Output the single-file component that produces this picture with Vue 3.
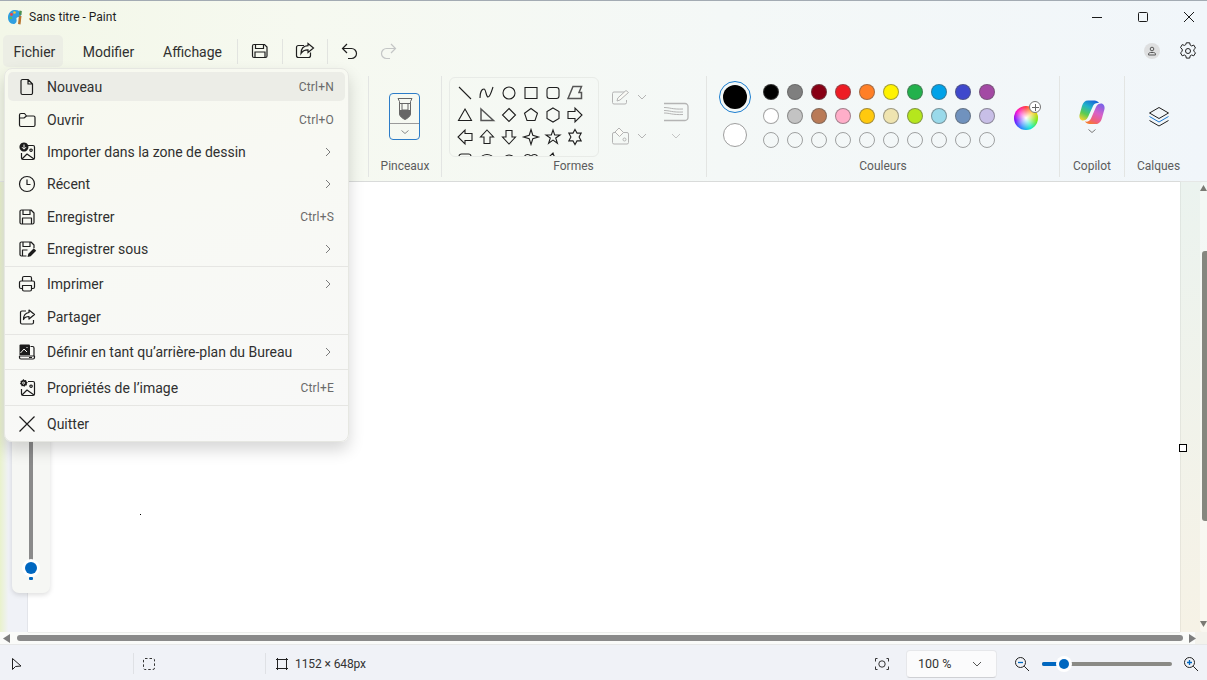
<template>
  <div class="window">
    <header class="titlebar">
      <svg class="app-icon" width="18" height="18" viewBox="0 0 18 18">
        <path d="M8 2c3.500-.6 6.500 1 7 4 .3 2-.8 3-2.300 3-1.700 0-2.700.9-2.200 2.500.5 1.700-.5 4.500-3 4.500C4 16 2 13 2 9.500 2 5.500 4.500 2.500 8 2z" fill="#2f9fe0" />
        <circle cx="5.500" cy="6.500" r="1.400" fill="#e8434f" />
        <circle cx="8.500" cy="4.500" r="1.300" fill="#f7c331" />
        <circle cx="4.800" cy="10" r="1.300" fill="#4fbf5f" />
        <path d="M13 7.500l2.500.5-1 8.500-2.500-.5z" fill="#b8752f" />
        <path d="M13.500 2.500l2.300.4-.3 4.100-2.500-.4z" fill="#4b8f4f" />
      </svg>
      <span class="app-title">Sans titre - Paint</span>
      <div class="window-controls">
        <svg width="46" height="30" viewBox="0 0 46 30"><path d="M18 15.500h10" stroke="#1a1a1a" fill="none" /></svg>
        <svg width="46" height="30" viewBox="0 0 46 30"><rect x="18.500" y="10.500" width="9" height="9" rx="1" stroke="#1a1a1a" fill="none" /></svg>
        <svg width="46" height="30" viewBox="0 0 46 30"><path d="M18 10l10 10M28 10L18 20" stroke="#1a1a1a" fill="none" /></svg>
      </div>
    </header>

    <nav class="menubar">
      <button class="menu-btn active">Fichier</button>
      <button class="menu-btn modifier">Modifier</button>
      <button class="menu-btn affichage">Affichage</button>
      <i class="vsep first"></i>
      <svg class="tool-icon" width="44" height="20" viewBox="0 0 44 20">
        <g fill="none" stroke="#1f1f1f" stroke-width="1.200">
          <path d="M16 3.500h10.500l2.500 2.500v9a1.500 1.500 0 0 1-1.500 1.500H16a1.500 1.500 0 0 1-1.500-1.500V5A1.500 1.500 0 0 1 16 3.500z" />
          <path d="M17.500 3.500v4h8v-4M17 16.500V11h10v5.500" />
        </g>
      </svg>
      <i class="vsep"></i>
      <svg class="tool-icon" width="44" height="20" viewBox="0 0 44 20">
        <g fill="none" stroke="#1f1f1f" stroke-width="1.200">
          <path d="M21 4.500h-5.500a2 2 0 0 0-2 2v8a2 2 0 0 0 2 2h10a2 2 0 0 0 2-2v-3" />
          <path d="M25 2.500l5.500 4.500-5.500 4.500V8.800c-3.500 0-5.500 1-7 3.700 0-4.500 2.500-7.500 7-7.800z" />
        </g>
      </svg>
      <i class="vsep"></i>
      <svg class="tool-icon" width="44" height="20" viewBox="0 0 44 20">
        <path d="M19 3l-4.500 4.500L19 12M15 7.500h8.500a5 5 0 0 1 0 10H20" fill="none" stroke="#1f1f1f" stroke-width="1.200" />
      </svg>
      <svg class="tool-icon redo" width="36" height="20" viewBox="0 0 36 20">
        <path d="M21 3l4.500 4.500L21 12M25 7.500h-8.500a5 5 0 0 0 0 10H20" fill="none" stroke="#c4c6c6" stroke-width="1.200" />
      </svg>
      <div class="menubar-right">
        <span class="avatar">
          <svg width="10" height="10" viewBox="0 0 10 10"><circle cx="5" cy="3" r="1.800" fill="none" stroke="#555" /><path d="M1.500 9v-.8c0-1 1-1.700 2-1.700h3c1 0 2 .7 2 1.700V9z" fill="none" stroke="#555" /></svg>
        </span>
        <svg class="gear" width="20" height="20" viewBox="0 0 20 20">
          <path d="M8.300 1.800h3.400l.5 2.300 1.400.8 2.200-.8 1.700 3-1.700 1.500v1.700l1.700 1.500-1.700 3-2.200-.8-1.400.8-.5 2.300H8.300l-.5-2.300-1.400-.8-2.200.8-1.700-3 1.700-1.500V8.100L2.500 6.600l1.700-3 2.200.8 1.400-.8z" fill="none" stroke="#1f1f1f" stroke-linejoin="round" />
          <circle cx="10" cy="10" r="2.500" fill="none" stroke="#1f1f1f" />
        </svg>
      </div>
    </nav>

    <section class="ribbon">
      <div class="group hidden-group"></div>

      <div class="group brushes">
        <div class="group-body">
          <div class="brush-btn">
            <svg width="16" height="22" viewBox="0 0 16 22">
              <path d="M1 .5h14l-1.500 3v2h-11v-2z" fill="none" stroke="#666" />
              <path d="M2.500 5.500H5v6.500h6V5.500h2.500V16c0 2-3 4.500-5.500 5.500-2.500-1-5.500-3.500-5.500-5.500z" fill="none" stroke="#666" />
              <path d="M2.500 12h11v4c0 2-3 4.500-5.500 5.500-2.500-1-5.500-3.500-5.500-5.500z" fill="#666" />
            </svg>
            <span class="brush-split"></span>
            <svg class="chev" width="10" height="6" viewBox="0 0 10 6"><path d="M1.500 1.500L5 4.500l3.500-3" fill="none" stroke="#8a8a8a" /></svg>
          </div>
        </div>
        <span class="group-label">Pinceaux</span>
      </div>

      <div class="group shapes">
        <div class="group-body shapes-body">
          <div class="gallery">
            <svg v-for="(d, i) in shapePaths" :key="i" width="22" height="22" viewBox="0 0 22 22">
              <path :d="d" fill="none" :stroke="i === 5 || i === 7 ? '#555' : '#1f1f1f'" :stroke-width="i === 5 || i === 7 ? 1.5 : 1.1" />
            </svg>
          </div>
          <div class="shape-opts">
            <div class="opt">
              <svg width="20" height="16" viewBox="0 0 20 16">
                <path d="M14 3H3a1.500 1.500 0 0 0-1.500 1.500v9A1.500 1.500 0 0 0 3 15h11a1.500 1.500 0 0 0 1.500-1.500V11" fill="none" stroke="#b4b4b4" />
                <path d="M6 12l.8-3L15 1.500l2.500 2L9 11z" fill="#fbfbf6" stroke="#b4b4b4" />
              </svg>
              <svg width="10" height="6" viewBox="0 0 10 6"><path d="M1 1l4 4 4-4" fill="none" stroke="#b4b4b4" /></svg>
            </div>
            <div class="opt">
              <svg width="20" height="18" viewBox="0 0 20 18">
                <rect x="1.500" y="5.500" width="16" height="11.500" rx="1.500" fill="none" stroke="#b4b4b4" />
                <path d="M4 5l4-4 4.500 4.500-4 4z" fill="#fbfbf6" stroke="#b4b4b4" />
                <circle cx="13.500" cy="12.500" r="1.500" fill="none" stroke="#b4b4b4" />
              </svg>
              <svg width="10" height="6" viewBox="0 0 10 6"><path d="M1 1l4 4 4-4" fill="none" stroke="#b4b4b4" /></svg>
            </div>
          </div>
          <div class="thickness">
            <svg width="26" height="20" viewBox="0 0 26 20">
              <path d="M1 1.500h21a3 3 0 0 1 3 3v11a3 3 0 0 1-3 3H1" fill="none" stroke="#b4b4b4" stroke-width="1.300" />
              <path d="M1 5.500c6 0 8 2 19 1.500M1 8.500c6 0 8 2 19 1.500M1 11c6 0 8 2 19 1.500" fill="none" stroke="#b4b4b4" />
            </svg>
            <svg width="10" height="6" viewBox="0 0 10 6"><path d="M1 1l4 4 4-4" fill="none" stroke="#c4c4c4" /></svg>
          </div>
        </div>
        <span class="group-label shapes-label">Formes</span>
      </div>

      <div class="group colours">
        <div class="group-body colours-body">
          <div class="current">
            <span class="cur-ring"><span class="cur-black"></span></span>
            <span class="cur-white"></span>
          </div>
          <div class="palette">
            <span
              v-for="(c, i) in palette"
              :key="i"
              class="swatch"
              :style="{ background: c }"
            ></span>
          </div>
          <div class="wheel">
            <span class="wheel-plus">
              <svg width="9" height="9" viewBox="0 0 9 9"><path d="M4.500 1v7M1 4.500h7" stroke="#666" fill="none" /></svg>
            </span>
          </div>
        </div>
        <span class="group-label">Couleurs</span>
      </div>

      <div class="group copilot">
        <div class="group-body copilot-body">
          <svg width="26" height="26" viewBox="0 0 26 26">
            <defs>
              <linearGradient id="cpa" x1="0.700" y1="0" x2="0.200" y2="1">
                <stop offset="0" stop-color="#1868d8" />
                <stop offset="0.350" stop-color="#20b4c8" />
                <stop offset="0.700" stop-color="#5ccc50" />
                <stop offset="1" stop-color="#f0d030" />
              </linearGradient>
              <linearGradient id="cpb" x1="0.800" y1="0" x2="0.300" y2="1">
                <stop offset="0" stop-color="#7a62e8" />
                <stop offset="0.450" stop-color="#d860c8" />
                <stop offset="0.800" stop-color="#f0607a" />
                <stop offset="1" stop-color="#f47a30" />
              </linearGradient>
            </defs>
            <path d="M17 25h-6.500c-2 0-3.500-1-4.500-2.500 3 .5 5-.5 6-3L17 8c1-2.500 3-3.500 5-3.500 2.500 0 4 2.500 3.500 5.500L23 19c-1 3.500-3 6-6 6z" fill="url(#cpb)" />
            <path d="M9 1.500h6.500c2 0 3.500 1 4.500 2.500-3-.5-5 .5-6 3L9 18c-1 2.500-3 3.500-5 3.500-2.500 0-4-2.500-3.500-5.500L3 7c1-3.500 3-5.500 6-5.500z" fill="url(#cpa)" />
          </svg>
          <svg width="10" height="6" viewBox="0 0 10 6"><path d="M1.500 1.500L5 4.500l3.500-3" fill="none" stroke="#7a7a7a" /></svg>
        </div>
        <span class="group-label">Copilot</span>
      </div>

      <div class="group layers">
        <div class="group-body layers-body">
          <svg width="22" height="22" viewBox="0 0 22 22">
            <path d="M11 1.500L20.500 7 11 12.500 1.500 7z" fill="none" stroke="#1f1f1f" />
            <path d="M1.500 10.500L11 16l9.500-5.500" fill="none" stroke="#1c78d0" />
            <path d="M1.500 14.500L11 20l9.500-5.500" fill="none" stroke="#1f1f1f" />
          </svg>
        </div>
        <span class="group-label">Calques</span>
      </div>
    </section>

    <main class="workspace">
      <div class="gutter"></div>
      <div class="canvas">
        <span class="dot"></span>
        <span class="handle"></span>
      </div>
      <div class="vscroll">
        <svg class="v-arrow" width="7" height="6" viewBox="0 0 7 6"><path d="M3.500 0L7 6H0z" fill="#7a7a74" /></svg>
        <span class="v-thumb"></span>
        <svg class="v-arrow bottom" width="7" height="6" viewBox="0 0 7 6"><path d="M0 0h7L3.500 6z" fill="#7a7a74" /></svg>
      </div>

      <div class="size-panel">
        <span class="size-track"></span>
        <span class="size-knob"></span>
        <span class="size-tick"></span>
      </div>
    </main>

    <div class="hscroll">
      <svg width="8" height="9" viewBox="0 0 8 9"><path d="M7 0v9L0 4.500z" fill="#7d7d7d" /></svg>
      <span class="h-thumb"></span>
      <svg width="8" height="9" viewBox="0 0 8 9"><path d="M1 0v9l7-4.500z" fill="#7d7d7d" /></svg>
    </div>

    <footer class="statusbar">
      <div class="st st-cursor">
        <svg width="14" height="14" viewBox="0 0 14 14"><path d="M4.500 1.500v11l3-3 5.500-.5z" fill="none" stroke="#1f1f1f" /></svg>
      </div>
      <div class="st st-select">
        <svg width="14" height="14" viewBox="0 0 14 14"><rect x="1.500" y="1.500" width="11" height="11" rx="1.500" fill="none" stroke="#333" stroke-dasharray="2.500 2" /></svg>
      </div>
      <div class="st st-size">
        <svg width="14" height="14" viewBox="0 0 14 14"><path d="M1 2.500h12M1 11.500h12M2.500 1v12M11.500 1v12" fill="none" stroke="#222" /></svg>
        <span>1152 × 648px</span>
      </div>
      <div class="st-right">
        <svg class="fit" width="16" height="14" viewBox="0 0 16 14">
          <path d="M3.500 1.500h-2v3M12.500 1.500h2v3M3.500 12.500h-2v-3M12.500 12.500h2v-3" fill="none" stroke="#333" />
          <circle cx="8" cy="7" r="3.200" fill="none" stroke="#333" />
        </svg>
        <div class="zoom-select">
          <span>100 %</span>
          <svg width="10" height="6" viewBox="0 0 10 6"><path d="M1 1l4 4 4-4" fill="none" stroke="#555" /></svg>
        </div>
        <svg class="zoom-out" width="16" height="16" viewBox="0 0 16 16">
          <circle cx="6.500" cy="6.500" r="5" fill="none" stroke="#222" />
          <path d="M10.200 10.200L15 15" stroke="#222" fill="none" />
          <path d="M4 6.500h5" stroke="#0067c0" stroke-width="1.300" fill="none" />
        </svg>
        <div class="zoom-slider">
          <span class="zs-fill"></span>
          <span class="zs-knob"></span>
        </div>
        <svg class="zoom-in" width="16" height="16" viewBox="0 0 16 16">
          <circle cx="6.500" cy="6.500" r="5" fill="none" stroke="#222" />
          <path d="M10.200 10.200L15 15" stroke="#222" fill="none" />
          <path d="M4 6.500h5M6.500 4v5" stroke="#0067c0" stroke-width="1.300" fill="none" />
        </svg>
      </div>
    </footer>

    <div class="file-menu">
      <div v-for="(group, g) in menu" :key="g" class="menu-group">
        <div
          v-for="item in group.items"
          :key="item.label"
          class="menu-item"
          :class="{ hovered: item.hovered }"
          :style="{ height: group.row + 'px' }"
        >
          <svg class="menu-icon" width="20" height="20" viewBox="0 0 20 20">
            <path :d="item.icon" fill="none" stroke="#1c1c1c" stroke-width="1.2" stroke-linejoin="round" />
            <path v-if="item.solid" :d="item.solid" fill="#1c1c1c" />
            <path v-if="item.light" :d="item.light" fill="none" stroke="#f8f9f4" />
          </svg>
          <span class="menu-label">{{ item.label }}</span>
          <span v-if="item.shortcut" class="menu-shortcut">{{ item.shortcut }}</span>
          <svg v-if="item.sub" class="menu-arrow" width="6" height="10" viewBox="0 0 6 10"><path d="M1 1l4 4-4 4" fill="none" stroke="#7c7c7c" /></svg>
        </div>
      </div>
    </div>
  </div>
</template>

<script setup>
const shapePaths = [
  'M5 5l12 12',
  'M4 16c0-6 2-9 4-9s2 8 4 8 3-4 5-10',
  'M17 11a6 6 0 1 1-12 0 6 6 0 0 1 12 0z',
  'M5 5.5h12v11H5z',
  'M7.5 5.5h7A2.500 2.500 0 0 1 17 8v6a2.500 2.500 0 0 1-2.500 2.500h-7A2.500 2.500 0 0 1 5 14V8a2.500 2.500 0 0 1 2.500-2.500z',
  'M9 4.500h8.500l-2.500 6h2.500v6H4z',
  'M11 5l6.500 11.500h-13z',
  'M5 5l12.500 11.500H5z',
  'M11 4.500l6.500 6.500-6.500 6.500L4.500 11z',
  'M11 4.500l6.500 4.700-2.500 7.300H7L4.500 9.200z',
  'M11 4l6 3.500v7L11 18l-6-3.500v-7z',
  'M4 7.500h7V4l7 7-7 7v-3.500H4z',
  'M18 7.500h-7V4l-7 7 7 7v-3.500h7z',
  'M11 4l6.500 7H14v6.500H8V11H4.500z',
  'M8 4.500h6V11h3.500L11 18l-6.500-7H8z',
  'M11 3.500l1.800 5.700 5.700 1.800-5.700 1.800-1.800 5.700-1.800-5.700L3.500 11l5.700-1.800z',
  'M11 4l1.700 5H18l-4.300 3 1.700 5.300-4.400-3.200-4.400 3.200 1.700-5.300-4.300-3h5.300z',
  'M11 3.500l2 3.600h4.200L15.100 11l2.100 3.900H13l-2 3.600-2-3.600H4.800L6.900 11 4.800 7.100H9z',
  'M5 12V8.500A2.500 2.500 0 0 1 7.500 6h7A2.500 2.500 0 0 1 17 8.500V12',
  'M4.500 12c0-3.500 3-5.500 6.500-5.500s6.500 2 6.500 5.500',
  'M6 12c0-3 2-5 5-5s5 2 5 5',
  'M4.500 12c-1-3 .5-5.500 3-5.500 1.500 0 3 1 3.500 2 .5-1 2-2 3.500-2 2.500 0 4 2.500 3 5.500',
  'M8 12l1-2-2-1 4-4 1 3 2 1-2 1'
]

const colours = [
  '#000000', '#7f7f7f', '#880015', '#ed1c24', '#ff7f27', '#fff200', '#22b14c', '#00a2e8', '#3f48cc', '#a349a4',
  '#ffffff', '#c3c3c3', '#b97a57', '#ffaec9', '#ffc90e', '#efe4b0', '#b5e61d', '#99d9ea', '#7092be', '#c8bfe7'
]
const palette = [...colours, ...Array(10).fill('transparent')]

const picture = 'M11 3.500h5A1.500 1.500 0 0 1 17.500 5v11a1.500 1.500 0 0 1-1.500 1.500H6A1.500 1.500 0 0 1 4.500 16v-5M5 17l5-5 7 5M14 7a1.200 1.200 0 1 0 .1 0z'

const menu = [
  {
    row: 32.4,
    items: [
      {
        label: 'Nouveau',
        icon: 'M5.500 2.500H11L15.500 7v9a1.500 1.500 0 0 1-1.500 1.500H5.500A1.500 1.500 0 0 1 4 16V4a1.500 1.500 0 0 1 1.500-1.500zM11 2.500V7h4.500',
        shortcut: 'Ctrl+N',
        hovered: true
      },
      {
        label: 'Ouvrir',
        icon: 'M2.500 15V5A1.500 1.500 0 0 1 4 3.500h3.500L9.500 6h7A1.500 1.500 0 0 1 18 7.500V15a1.500 1.500 0 0 1-1.500 1.500H4A1.500 1.500 0 0 1 2.500 15zM2.500 8H7l2.500-2',
        shortcut: 'Ctrl+O'
      },
      {
        label: 'Importer dans la zone de dessin',
        icon: picture,
        solid: 'M7 .5a4.500 4.500 0 1 1-.1 0z',
        light: 'M7 2.500V7M5 5.200L7 7.200l2-2',
        sub: true
      },
      {
        label: 'Récent',
        icon: 'M17.500 10a7.500 7.500 0 1 1-15 0 7.500 7.500 0 0 1 15 0zM10 5.500v5h3.500',
        sub: true
      },
      {
        label: 'Enregistrer',
        icon: 'M4.500 3H14l3 3v9.500a1.500 1.500 0 0 1-1.500 1.500h-11A1.500 1.500 0 0 1 3 15.500v-11A1.500 1.500 0 0 1 4.500 3zM6 3v4.500h7V3M5.500 17v-6h9v6',
        shortcut: 'Ctrl+S'
      },
      {
        label: 'Enregistrer sous',
        icon: 'M4.500 3H14l3 3v3M9.500 17h-5A1.500 1.500 0 0 1 3 15.500v-11A1.500 1.500 0 0 1 4.500 3M6 3v4.500h7V3M5.500 17v-6h5',
        solid: 'M10.500 18l.8-3.200 5.500-5.500 2.400 2.400-5.500 5.500z',
        sub: true
      }
    ]
  },
  {
    row: 33,
    items: [
      {
        label: 'Imprimer',
        icon: 'M5.500 7V4A1.500 1.500 0 0 1 7 2.500h6A1.500 1.500 0 0 1 14.500 4v3M5.500 14.500H4A1.500 1.500 0 0 1 2.500 13V8.500A1.500 1.500 0 0 1 4 7h12a1.500 1.500 0 0 1 1.500 1.500V13a1.500 1.500 0 0 1-1.500 1.500h-1.500M5.500 11.500h9v4A1.500 1.500 0 0 1 13 17H7a1.500 1.500 0 0 1-1.500-1.500z',
        sub: true
      },
      {
        label: 'Partager',
        icon: 'M9 4H5a1.500 1.500 0 0 0-1.500 1.500v10A1.500 1.500 0 0 0 5 17h10a1.500 1.500 0 0 0 1.500-1.500V13M12 3l5.500 4.500L12 12V9.500c-2.800 0-4.500 1-5.500 3 0-4 2-6.500 5.500-7z'
      }
    ]
  },
  {
    row: 34,
    items: [
      {
        label: 'Définir en tant qu’arrière-plan du Bureau',
        icon: 'M13.500 4.500h2A1.500 1.500 0 0 1 17 6v8M2.500 14v1.500A1.500 1.500 0 0 0 4 17h12a1.500 1.500 0 0 0 1.500-1.500V14zM12 15.500h3',
        solid: 'M3.500 2.500H12A1 1 0 0 1 13 3.500V13H2.500V3.500a1 1 0 0 1 1-1z',
        light: 'M3.500 11l3.500-4 3 3M9.500 5.500h1',
        sub: true
      }
    ]
  },
  {
    row: 35,
    items: [
      {
        label: 'Propriétés de l’image',
        icon: picture,
        solid: 'M6.500 1l1 1.200 1.600-.3.300 1.600 1.300 1-1 1.300.3 1.500-1.600.3-1 1.200-1.300-.9-1.500.4-.4-1.600-1.300-1 .9-1.300-.3-1.500 1.600-.4z',
        light: 'M6.500 4.200a.9.900 0 1 0 .1 0z',
        shortcut: 'Ctrl+E'
      }
    ]
  },
  {
    row: 35,
    items: [{ label: 'Quitter', icon: 'M2.500 2.500l15 15M17.500 2.500l-15 15' }]
  }
]
</script>

<style scoped>
.window {
  position: relative;
  width: 1207px;
  height: 680px;
  overflow: hidden;
  display: flex;
  flex-direction: column;
  font-family: Roboto, "Open Sans", Arial, sans-serif;
  color: #1f1f1f;
  background: linear-gradient(90deg, #f3f7e8 0, #f6f9f0 25%, #f4f8f7 60%, #f1f6fa 100%);
  border-top: 1px solid #a3abb3;
  box-sizing: border-box;
}

.titlebar {
  height: 31px;
  flex: none;
  display: flex;
  align-items: center;
  padding-left: 6px;
}
.app-icon {
  flex: none;
}
.app-title {
  margin-left: 5px;
  font-size: 12px;
}
.window-controls {
  margin-left: auto;
  display: flex;
  margin-right: -5px;
}

.menubar {
  height: 38px;
  flex: none;
  display: flex;
  align-items: center;
  padding-left: 3px;
}
.menu-btn {
  height: 32px;
  border: 0;
  border-radius: 5px;
  background: transparent;
  font: inherit;
  font-size: 14px;
  color: #303030;
  padding: 1px 0 0;
}
.menu-btn.active {
  width: 60px;
  padding-left: 3px;
  background: #eceee5;
}
.menu-btn.modifier {
  margin-left: 19px;
  width: 53px;
}
.menu-btn.affichage {
  margin-left: 28px;
  width: 58px;
}
.vsep {
  width: 1px;
  height: 25px;
  background: #e2e4e0;
  flex: none;
}
.vsep.first {
  margin-left: 16px;
}
.tool-icon {
  flex: none;
}
.tool-icon.redo {
  margin-left: -2px;
}
.menubar-right {
  margin-left: auto;
  display: flex;
  align-items: center;
  padding-right: 9px;
  gap: 18px;
}
.avatar {
  width: 16px;
  height: 16px;
  border-radius: 50%;
  background: #dedfe0;
  display: flex;
  align-items: center;
  justify-content: center;
}

.ribbon {
  height: 112px;
  flex: none;
  display: flex;
  border-bottom: 1px solid #e5e7e6;
  box-sizing: border-box;
  padding-top: 6px;
}
.group {
  display: flex;
  flex-direction: column;
  align-items: center;
  height: 101px;
  border-right: 1px solid #e3e5e3;
  box-sizing: border-box;
}
.group:last-child {
  border-right: 0;
}
.group-body {
  flex: 1;
  min-height: 0;
  align-self: stretch;
  display: flex;
}
.group-label {
  font-size: 12px;
  color: #5c5c5c;
  line-height: 16px;
  height: 19px;
}
.hidden-group {
  width: 369px;
}
.brushes {
  width: 73px;
}
.brushes .group-body {
  justify-content: center;
  padding: 17px 1px 0 0;
}
.brush-btn {
  width: 31px;
  height: 47px;
  border: 1px solid #2c7cc8;
  border-radius: 4px;
  box-sizing: border-box;
  display: flex;
  flex-direction: column;
  align-items: center;
  padding-top: 4px;
}
.brush-split {
  width: 100%;
  height: 1px;
  background: #9a9a9a;
  margin-top: 3px;
}
.chev {
  margin-top: 5px;
}
.shapes {
  width: 265px;
}
.shapes-body {
  padding: 1px 0 0 7px;
}
.shapes-label {
  margin-left: -1px;
}
.gallery {
  width: 150px;
  height: 80px;
  border: 1px solid #e8ebe7;
  border-radius: 6px;
  box-sizing: border-box;
  padding: 4px 0 0 4px;
  overflow: hidden;
  display: grid;
  grid-template-columns: repeat(6, 22px);
  grid-auto-rows: 22px;
}
.gallery svg {
  display: block;
}
.shape-opts {
  margin-left: 12px;
  display: flex;
  flex-direction: column;
  gap: 20px;
  padding-top: 10px;
}
.opt {
  display: flex;
  align-items: center;
  gap: 6px;
  height: 19px;
}
.thickness {
  margin-left: 16px;
  display: flex;
  flex-direction: column;
  align-items: center;
  gap: 11px;
  padding-top: 25px;
}
.colours {
  width: 353px;
}
.colours-body {
  padding-left: 11px;
}
.current {
  width: 34px;
  display: flex;
  flex-direction: column;
  align-items: center;
  gap: 10px;
  padding-top: 5px;
}
.cur-ring {
  width: 32px;
  height: 32px;
  border: 1px solid #1c7ed0;
  border-radius: 50%;
  box-sizing: border-box;
  display: flex;
  align-items: center;
  justify-content: center;
}
.cur-black {
  width: 24px;
  height: 24px;
  background: #000;
  border-radius: 50%;
}
.cur-white {
  width: 24px;
  height: 24px;
  background: #fff;
  border: 1px solid #9e9e9e;
  border-radius: 50%;
  box-sizing: border-box;
}
.palette {
  margin: 8px 0 0 11px;
  display: grid;
  grid-template-columns: repeat(10, 16px);
  grid-auto-rows: 16px;
  gap: 8px;
  align-content: start;
}
.swatch {
  border: 1px solid rgba(90, 90, 90, 0.55);
  border-radius: 50%;
  box-sizing: border-box;
}
.wheel {
  position: relative;
  width: 24px;
  height: 24px;
  margin: 30px 0 0 19px;
  border-radius: 50%;
  background:
    radial-gradient(circle, #fff 0, rgba(255, 255, 255, 0) 72%),
    conic-gradient(#ff2d2d, #ffc400, #6fe800, #00e8c8, #1a7cff, #6a00ff, #ff00c8, #ff2d2d);
}
.wheel-plus {
  position: absolute;
  top: -5px;
  right: -3px;
  width: 12px;
  height: 12px;
  border: 1px solid #777;
  border-radius: 50%;
  background: #fff;
  display: flex;
  align-items: center;
  justify-content: center;
  box-sizing: border-box;
}
.copilot {
  width: 65px;
}
.copilot-body {
  flex-direction: column;
  align-items: center;
  padding-top: 23px;
  gap: 3px;
}
.layers {
  flex: 1;
  padding-right: 15px;
}
.layers-body {
  justify-content: center;
  padding-top: 30px;
}

.workspace {
  position: relative;
  flex: 1;
  min-height: 0;
  display: flex;
  background: linear-gradient(180deg, #ebf3ef, #f6f2e6);
}
.gutter {
  width: 28px;
  flex: none;
  background:
    linear-gradient(90deg, #e9f2cc 0, rgba(240, 242, 247, 0) 30%),
    #f0f2f7;
}
.canvas {
  position: relative;
  width: 1152px;
  flex: none;
  background: #fff;
  box-shadow: 0 0 1px rgba(0, 0, 0, 0.3);
}
.dot {
  position: absolute;
  left: 112px;
  top: 332px;
  width: 1px;
  height: 1px;
  background: #000;
}
.handle {
  position: absolute;
  right: -7px;
  top: 262px;
  width: 6px;
  height: 6px;
  background: #fff;
  border: 1px solid #000;
}
.vscroll {
  flex: 1;
  margin-left: 20px;
  display: flex;
  flex-direction: column;
  align-items: flex-end;
  padding: 3px 0 5px;
  box-sizing: border-box;
  background: rgba(255, 255, 255, 0.4);
  border-radius: 3px 0 0 3px;
}
.v-arrow {
  flex: none;
}
.v-arrow.bottom {
  margin-top: auto;
}
.v-thumb {
  flex: none;
  width: 5px;
  height: 270px;
  background: #85877f;
  margin-top: 60px;
  border-radius: 3px 0 0 3px;
}
.size-panel {
  position: absolute;
  left: 12px;
  top: 60px;
  width: 38px;
  height: 351px;
  background: #f6f7f4;
  border-radius: 7px;
  box-shadow: 0 2px 5px rgba(0, 0, 0, 0.13);
}
.size-track {
  position: absolute;
  left: 17px;
  top: 0;
  bottom: 30px;
  width: 4px;
  background: #8a8a8a;
}
.size-knob {
  position: absolute;
  left: 13px;
  top: 320px;
  width: 12px;
  height: 12px;
  border-radius: 50%;
  background: #0067c0;
  box-shadow: 0 0 0 3px #fff;
}
.size-tick {
  position: absolute;
  left: 17px;
  top: 335px;
  width: 4px;
  height: 3px;
  background: #0067c0;
  border-radius: 1px;
}

.hscroll {
  height: 12px;
  flex: none;
  display: flex;
  align-items: center;
  padding: 0 11px 0 3px;
  gap: 5px;
  background: linear-gradient(90deg, #fafbf9 99%, #f3f2ec 99%);
  border-bottom: 1px solid #e7e8e8;
}
.h-thumb {
  flex: 1;
  height: 6px;
  margin-left: 1px;
  border-radius: 3px;
  background: #8a8a8a;
}

.statusbar {
  height: 35px;
  flex: none;
  display: flex;
  align-items: center;
  padding-top: 2px;
  box-sizing: border-box;
  background: #f0f2f7;
  font-size: 12px;
  color: #333;
}
.st {
  height: 21px;
  display: flex;
  align-items: center;
  box-sizing: border-box;
  padding-left: 8px;
}
.st-cursor {
  width: 134px;
  border-right: 1px solid #dfe1e5;
}
.st-select {
  width: 132px;
  border-right: 1px solid #dfe1e5;
}
.st-size {
  padding-left: 9px;
  gap: 6px;
  letter-spacing: -0.1px;
}
.st-right {
  margin-left: auto;
  display: flex;
  align-items: center;
  padding-right: 8px;
}
.zoom-select {
  width: 91px;
  height: 28px;
  margin-left: 16px;
  background: #fbfbfc;
  border: 1px solid #e6e7ea;
  border-bottom-color: #cfd0d4;
  border-radius: 4px;
  box-sizing: border-box;
  display: flex;
  align-items: center;
  justify-content: space-between;
  padding: 0 14px 0 11px;
  font-size: 12.5px;
}
.zoom-out {
  margin-left: 17px;
}
.zoom-slider {
  position: relative;
  width: 130px;
  height: 4px;
  margin: 0 11px 0 12px;
  background: #8a8a85;
  border-radius: 2px;
}
.zs-fill {
  position: absolute;
  left: 0;
  top: 0;
  width: 20px;
  height: 4px;
  background: #0067c0;
  border-radius: 2px;
}
.zs-knob {
  position: absolute;
  left: 17px;
  top: -3px;
  width: 10px;
  height: 10px;
  background: #0067c0;
  border-radius: 50%;
  box-shadow: 0 0 0 3px #fff;
}

.file-menu {
  position: absolute;
  left: 4px;
  top: 67px;
  width: 345px;
  background: linear-gradient(160deg, #f7f9ee 0, #f8f9f4 40%, #f8f8f8 100%);
  border: 1px solid #e6e7e2;
  border-radius: 8px;
  box-shadow: 0 8px 16px rgba(0, 0, 0, 0.16);
  box-sizing: border-box;
  padding-top: 2px;
}
.menu-group {
  border-top: 1px solid #e6e6e3;
}
.menu-group:first-child {
  border-top: 0;
  padding-bottom: 1px;
}
.menu-group:nth-child(2) {
  padding-bottom: 1px;
}
.menu-item {
  position: relative;
  display: flex;
  align-items: center;
  padding: 0 14px 0 12px;
  font-size: 14px;
  color: #303030;
}
.menu-item.hovered::before {
  content: "";
  position: absolute;
  left: 3px;
  right: 3px;
  top: 1px;
  bottom: 2px;
  border-radius: 5px;
  background: #ecede7;
}
.menu-icon,
.menu-label,
.menu-shortcut,
.menu-arrow {
  position: relative;
}
.menu-icon {
  flex: none;
}
.menu-label {
  margin-left: 10px;
}
.menu-shortcut {
  margin-left: auto;
  font-size: 12px;
  letter-spacing: 0.2px;
  color: #6a6a6a;
}
.menu-arrow {
  margin-left: auto;
  margin-right: 3px;
}
</style>
